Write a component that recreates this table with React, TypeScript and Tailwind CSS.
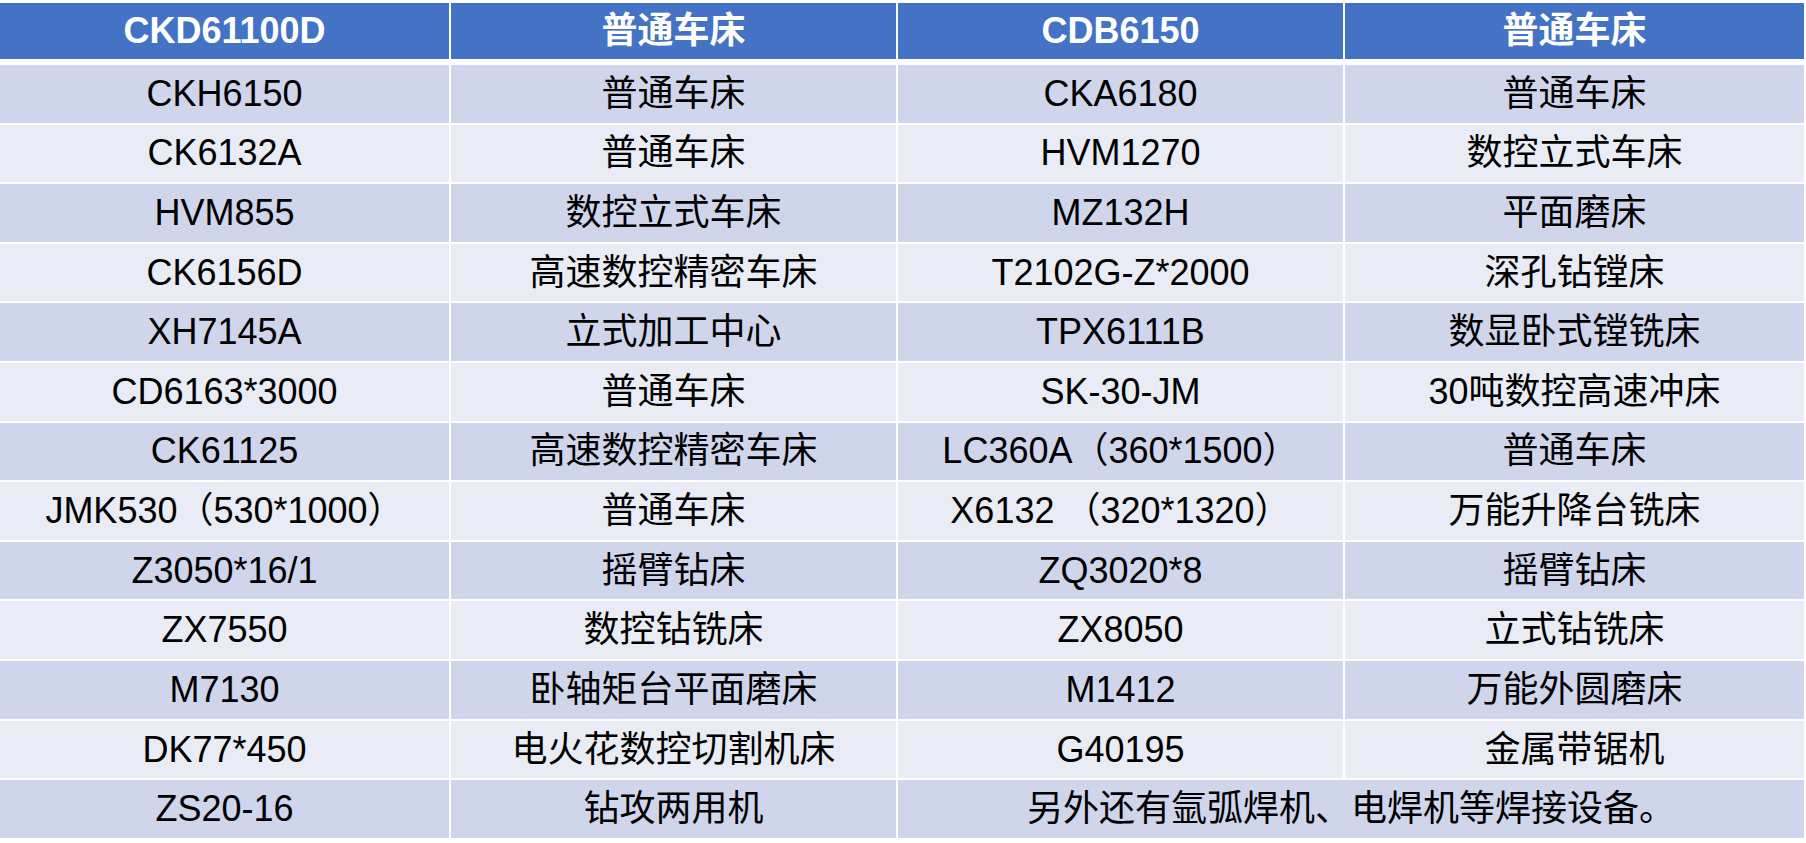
import React from 'react';

type Row = {
  a: string;
  b: string;
  c: string;
  d?: string;
};

const rows: Row[] = [
  { a: 'CKH6150', b: '普通车床', c: 'CKA6180', d: '普通车床' },
  { a: 'CK6132A', b: '普通车床', c: 'HVM1270', d: '数控立式车床' },
  { a: 'HVM855', b: '数控立式车床', c: 'MZ132H', d: '平面磨床' },
  { a: 'CK6156D', b: '高速数控精密车床', c: 'T2102G-Z*2000', d: '深孔钻镗床' },
  { a: 'XH7145A', b: '立式加工中心', c: 'TPX6111B', d: '数显卧式镗铣床' },
  { a: 'CD6163*3000', b: '普通车床', c: 'SK-30-JM', d: '30吨数控高速冲床' },
  { a: 'CK61125', b: '高速数控精密车床', c: 'LC360A（360*1500）', d: '普通车床' },
  { a: 'JMK530（530*1000）', b: '普通车床', c: 'X6132 （320*1320）', d: '万能升降台铣床' },
  { a: 'Z3050*16/1', b: '摇臂钻床', c: 'ZQ3020*8', d: '摇臂钻床' },
  { a: 'ZX7550', b: '数控钻铣床', c: 'ZX8050', d: '立式钻铣床' },
  { a: 'M7130', b: '卧轴矩台平面磨床', c: 'M1412', d: '万能外圆磨床' },
  { a: 'DK77*450', b: '电火花数控切割机床', c: 'G40195', d: '金属带锯机' },
  { a: 'ZS20-16', b: '钻攻两用机', c: '另外还有氩弧焊机、电焊机等焊接设备。' },
];

const cols = 'grid grid-cols-[449px_445px_445px_459px] gap-x-[2px]';
const cell = 'flex items-center justify-center whitespace-pre';

const App: React.FC = () => {
  return (
    <div
      className="w-[1806px] h-[843px] bg-white pt-[3px] text-[36px] leading-none text-black"
      style={{ fontFamily: '"Liberation Sans", "Noto Sans CJK SC", sans-serif' }}
    >
      {/* header */}
      <div className={`${cols} h-[56px] mb-[6px] font-bold text-white`}>
        <div className={`${cell} bg-[#4472c4]`}>CKD61100D</div>
        <div className={`${cell} bg-[#4472c4]`}>普通车床</div>
        <div className={`${cell} bg-[#4472c4]`}>CDB6150</div>
        <div className={`${cell} bg-[#4472c4]`}>普通车床</div>
      </div>

      <div className="flex flex-col gap-y-[2px] h-[773px]">
        {rows.map((row, i) => {
          const bg = i % 2 === 0 ? 'bg-[#cfd5ea]' : 'bg-[#e9ebf5]';
          return (
            <div key={i} className={`${cols} flex-1`}>
              <div className={`${cell} ${bg}`}>{row.a}</div>
              <div className={`${cell} ${bg}`}>{row.b}</div>
              {row.d ? (
                <>
                  <div className={`${cell} ${bg}`}>{row.c}</div>
                  <div className={`${cell} ${bg}`}>{row.d}</div>
                </>
              ) : (
                <div className={`${cell} ${bg} col-span-2`}>{row.c}</div>
              )}
            </div>
          );
        })}
      </div>
    </div>
  );
};

export default App;
